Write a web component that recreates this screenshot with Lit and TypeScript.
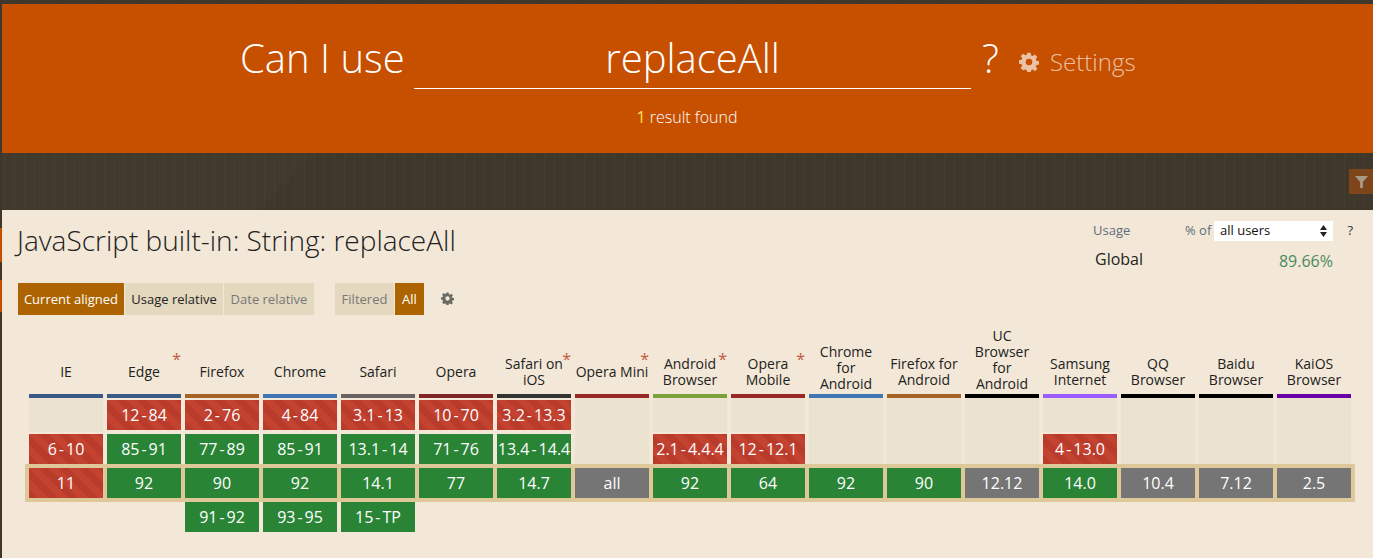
import { LitElement, html, css } from "lit";
import { customElement } from "lit/decorators.js";

type Kind = "r" | "g" | "u" | "e" | "t" | "f";
interface Col { name: string[]; bar: string; star?: boolean; }
const cols: Col[] = [
  { name: ["IE"], bar: "#3a5a85" },
  { name: ["Edge"], bar: "#3a5a85", star: true },
  { name: ["Firefox"], bar: "#a56426" },
  { name: ["Chrome"], bar: "#4077b3" },
  { name: ["Safari"], bar: "#6b6363" },
  { name: ["Opera"], bar: "#7f2525" },
  { name: ["Safari on", "iOS"], bar: "#333333", star: true },
  { name: ["Opera Mini"], bar: "#982828", star: true },
  { name: ["Android", "Browser"], bar: "#7ca03a", star: true },
  { name: ["Opera", "Mobile"], bar: "#982828", star: true },
  { name: ["Chrome", "for", "Android"], bar: "#4077b3" },
  { name: ["Firefox for", "Android"], bar: "#a56426" },
  { name: ["UC", "Browser", "for", "Android"], bar: "#000000" },
  { name: ["Samsung", "Internet"], bar: "#9a5cff" },
  { name: ["QQ", "Browser"], bar: "#000000" },
  { name: ["Baidu", "Browser"], bar: "#000000" },
  { name: ["KaiOS", "Browser"], bar: "#6a00a8" },
];
type Cell = [Kind, string?, string?];
const row1: Cell[] = [["t"], ["r", "12", "84"], ["r", "2", "76"], ["r", "4", "84"], ["r", "3.1", "13"], ["r", "10", "70"], ["r", "3.2", "13.3"], ["f"], ["t"], ["t"], ["f"], ["f"], ["f"], ["t"], ["f"], ["f"], ["f"]];
const row2: Cell[] = [["r", "6", "10"], ["g", "85", "91"], ["g", "77", "89"], ["g", "85", "91"], ["g", "13.1", "14"], ["g", "71", "76"], ["g", "13.4", "14.4"], ["e"], ["r", "2.1", "4.4.4"], ["r", "12", "12.1"], ["e"], ["e"], ["e"], ["r", "4", "13.0"], ["e"], ["e"], ["e"]];
const row3: Cell[] = [["r", "11"], ["g", "92"], ["g", "90"], ["g", "92"], ["g", "14.1"], ["g", "77"], ["g", "14.7"], ["u", "all"], ["g", "92"], ["g", "64"], ["g", "92"], ["g", "90"], ["u", "12.12"], ["g", "14.0"], ["u", "10.4"], ["u", "7.12"], ["u", "2.5"]];
const row4: (Cell | null)[] = [null, null, ["g", "91", "92"], ["g", "93", "95"], ["g", "15", "TP"]];

const gear = (cls: string) => html`<svg class=${cls} viewBox="0 0 24 24"><path fill-rule="evenodd" d="M10 1h4l.6 3.1 1.9.8L19.1 3 22 5.900l-1.900 2.600.8 1.900 3.100.6v4l-3.100.6-.8 1.900 1.900 2.600-2.900 2.900-2.600-1.900-1.900.8-.6 3.100h-4l-.6-3.100-1.900-.8L4.900 22 2 19.100l1.900-2.600-.8-1.900L0 14v-4l3.100-.6.8-1.900L2 4.900 4.900 2l2.600 1.900 1.900-.8zM12 8a4 4 0 1 0 0 8 4 4 0 0 0 0-8z"/></svg>`;

@customElement("app-root")
export class AppRoot extends LitElement {
  static styles = css`
    :host { display: block; width: 1373px; height: 558px; overflow: hidden; font-family: "Open Sans", sans-serif; color: #222;
      background-color: #3f382a;
      background-image: repeating-linear-gradient(90deg, transparent 0 4px, #443d2f 4px 5px, transparent 5px 10px); }
    .page { position: relative; padding: 4px 0 0 2px; }
    .edge { position: absolute; left: 0; width: 2px; background: #c75000; }
    .edge.a { top: 228px; height: 34px; }
    .edge.b { top: 280px; height: 32px; }
    header { height: 149px; background: #c75000; box-sizing: border-box; color: #fff; font-weight: 300; padding-top: 30px; }
    .search { display: flex; align-items: flex-start; height: 55px; padding-left: 238px; }
    .can { font-size: 40px; line-height: 48px; width: 174px; white-space: nowrap; }
    .input { width: 557px; height: 55px; box-sizing: border-box; border-bottom: 1px solid #fff; font-size: 40px; line-height: 48px; text-align: center; }
    .q { font-size: 40px; line-height: 48px; margin-left: 11px; width: 37px; }
    .settings { display: flex; align-items: center; gap: 11px; font-size: 24px; line-height: 56px; color: rgba(255,255,255,.65); }
    .hdr-gear { width: 20px; height: 20px; fill: rgba(255,255,255,.65); }
    .result { text-align: center; font-size: 16px; font-weight: 300; line-height: 22px; margin: 17px 0 0 -1px; color: #fff; }
    .result b { font-weight: 400; color: #ffe14d; }
    .strip { height: 57px; display: flex; justify-content: flex-end; padding-top: 16px; box-sizing: border-box;
      background-image: linear-gradient(135deg, rgba(255,255,255,.012) 222px, transparent 222px); }
    .filter { width: 24px; height: 25px; background: #7d4519; display: flex; align-items: center; justify-content: center; }
    .filter svg { width: 13px; height: 13px; fill: #a89a88; }
    main { background: #f3e8d7; height: 348px; position: relative; padding-top: 13px; box-sizing: border-box; }
    .top { display: flex; justify-content: space-between; height: 60px; }
    h1 { margin: -1px 0 0 15px; font-weight: 300; font-size: 28px; line-height: 36px; color: #222; }
    .usage { width: 260px; margin-right: 20px; font-size: 13px; }
    .u1 { display: grid; grid-template-columns: 92px 29px 119px 20px; align-items: center; height: 20px; margin-top: -2px; color: #5f6d7a; }
    .u1 > span { margin-top: -2px; }
    .sel { background: #fff; height: 20px; display: flex; justify-content: space-between; align-items: center; padding: 0 6px; color: #111; font-size: 13px; box-sizing: border-box; }
    .sel span { margin-top: -2px; }
    .sel svg { width: 7px; height: 12px; fill: #222; }
    .qq { text-align: right; color: #333; }
    .u2 { display: flex; justify-content: space-between; width: 240px; margin-top: 7px; font-size: 16px; line-height: 22px; padding-left: 2px; box-sizing: border-box; }
    .pct { color: #4a8a5e; margin-top: 2px; }
    .toolbar { display: flex; align-items: center; margin: 0 0 0 16px; height: 32px; font-size: 13px; }
    .btn { height: 32px; line-height: 32px; padding: 0 4px; background: #e4d8bf; margin-right: 1px; color: #222; white-space: nowrap; box-sizing: border-box; text-align: center; }
    .btn.on { background: #ad6400; color: #fff; }
    .btn.dim { color: #777; }
    .w1 { width: 106px; } .w2 { width: 98px; } .w3 { width: 90px; margin-right: 21px; } .w4 { width: 59px; } .w5 { width: 29px; }
    .tool-gear { width: 13px; height: 13px; fill: #6a6a64; margin: -2px 0 0 16px; }
    .heads { display: flex; gap: 4px; margin: 13px 0 0 27px; height: 66px; align-items: flex-end; font-size: 14px; line-height: 16px; text-align: center; }
    .head { width: 74px; position: relative; min-height: 32px; margin-bottom: 6px; display: flex; flex-direction: column; justify-content: center; white-space: nowrap; }
    .head.tall { margin-bottom: 2px; }
    .star { position: absolute; right: 0; top: -5px; color: #c0593f; font-size: 16px; line-height: 16px; }
    .bars { display: flex; gap: 4px; margin-left: 27px; }
    .bar { width: 74px; height: 4px; }
    .row { display: flex; gap: 4px; margin-left: 27px; align-items: flex-start; }
    .r1 { height: 36px; }
    .r2 { height: 30px; }
    .r3 { height: 30px; margin: 0 0 0 23px; padding: 4px; background: #dec799; width: max-content; }
    .r4 { height: 30px; }
    .cell { width: 74px; height: 30px; font-size: 16px; line-height: 30px; color: #fff; text-align: center; white-space: nowrap; }
    .gap { width: 74px; height: 30px; }
    .dash { margin: 0 2px; }
    .r { background-color: #c44230; background-image: repeating-linear-gradient(45deg, #b93b2c 0 7px, #c44230 7px 14px); }
    .g { background: #2a8436; }
    .u { background: #757575; }
    .e { background: #ebe3d0; }
    .t { background: #ebe3d0; height: 34px; }
    .f { background: #ebe3d0; height: 36px; }
    .r1 .r, .r1 .g { margin-top: 2px; }
  `;

  private cell(c: Cell | null) {
    if (!c) return html`<div class="gap"></div>`;
    const [k, a, b] = c;
    return html`<div class="cell ${k}">${a ?? ""}${b ? html`<span class="dash">-</span>${b}` : ""}</div>`;
  }

  render() {
    return html`<div class="page">
      <div class="edge a"></div><div class="edge b"></div>
      <header>
        <div class="search">
          <div class="can">Can I use</div>
          <div class="input">replaceAll</div>
          <div class="q">?</div>
          <div class="settings">${gear("hdr-gear")}<span>Settings</span></div>
        </div>
        <div class="result"><b>1</b> result found</div>
      </header>
      <div class="strip"><div class="filter"><svg viewBox="0 0 14 14"><path d="M0 1h14L8.500 7.500V14h-3V7.500z"/></svg></div></div>
      <main>
        <div class="top">
          <h1>JavaScript built-in: String: replaceAll</h1>
          <div class="usage">
            <div class="u1"><span>Usage</span><span>% of</span>
              <div class="sel"><span>all users</span><svg viewBox="0 0 7 12"><path d="M3.500 0 7 5H0zM0 7h7l-3.500 5z"/></svg></div>
              <span class="qq">?</span></div>
            <div class="u2"><span>Global</span><span class="pct">89.66%</span></div>
          </div>
        </div>
        <div class="toolbar">
          <div class="btn on w1">Current aligned</div><div class="btn w2">Usage relative</div><div class="btn dim w3">Date relative</div>
          <div class="btn dim w4">Filtered</div><div class="btn on w5">All</div>
          ${gear("tool-gear")}
        </div>
        <div class="heads">
          ${cols.map((c) => html`<div class="head ${c.name.length > 2 ? "tall" : ""}">${c.name.map((n) => html`<div>${n}</div>`)}${c.star ? html`<span class="star">*</span>` : ""}</div>`)}
        </div>
        <div class="bars">${cols.map((c) => html`<div class="bar" style="background:${c.bar}"></div>`)}</div>
        <div class="row r1">${row1.map((c) => this.cell(c))}</div>
        <div class="row r2">${row2.map((c) => this.cell(c))}</div>
        <div class="row r3">${row3.map((c) => this.cell(c))}</div>
        <div class="row r4">${row4.map((c) => this.cell(c))}</div>
      </main>
    </div>`;
  }
}
